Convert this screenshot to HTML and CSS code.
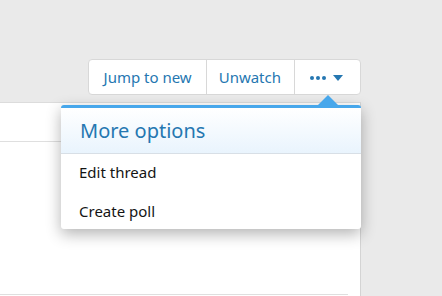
FILE: index.html
```html
<!DOCTYPE html>
<html lang="en">
<head>
  <meta charset="UTF-8">
  <title>Thread</title>
  <link rel="stylesheet" href="styles.css">
</head>
<body>
  <div class="topbar">
    <div class="button-group">
      <a class="group-btn jump" href="#">Jump to new</a>
      <a class="group-btn" href="#">Unwatch</a>
      <a class="group-btn more" href="#">
        <svg width="16" height="4" viewBox="0 0 16 4">
          <circle cx="2" cy="2" r="2" fill="#2577b1"/>
          <circle cx="8" cy="2" r="2" fill="#2577b1"/>
          <circle cx="14" cy="2" r="2" fill="#2577b1"/>
        </svg>
        <svg width="10" height="6" viewBox="0 0 10 6"><path d="M0 0 L10 0 L5 6 Z" fill="#2577b1"/></svg>
      </a>
    </div>
  </div>

  <div class="panel">
    <div class="panel-head"></div>
    <div class="panel-body">
      <div class="panel-line"></div>
    </div>
  </div>

  <div class="menu">
    <div class="menu-arrow"></div>
    <div class="menu-title">More options</div>
    <a class="menu-item" href="#">Edit thread</a>
    <a class="menu-item" href="#">Create poll</a>
  </div>
</body>
</html>
```

FILE: styles.css
```css
body {
  margin: 0;
  background: #eaeaea;
  font-family: 'Noto Sans', 'Open Sans', sans-serif;
  height: 296px;
  overflow: hidden;
}

a {
  text-decoration: none;
}

.topbar {
  height: 102px;
  box-sizing: border-box;
  padding: 59px 81px 0 0;
  display: flex;
  justify-content: flex-end;
  align-items: flex-start;
}

.button-group {
  display: flex;
  background: #fff;
  border: 1px solid #d8d8d8;
  border-radius: 4px;
  height: 34px;
}

.group-btn {
  display: flex;
  align-items: center;
  padding: 0 13px 0 12px;
  color: #2577b1;
  font-size: 15px;
  border-left: 1px solid #d8d8d8;
}

.group-btn:first-child {
  border-left: none;
}

.group-btn.jump {
  padding: 0 14px 0 15px;
}

.group-btn.more {
  gap: 7px;
  padding: 1px 17px 0 15px;
}

.panel {
  width: 360px;
  height: 194px;
  background: #fff;
  border-top: 1px solid #dcdcdc;
  border-right: 1px solid #d4d4d4;
}

.panel-head {
  height: 38px;
  border-bottom: 1px solid #dfdfdf;
}

.panel-body {
  padding: 152px 12px 0 0;
}

.panel-line {
  height: 1px;
  background: #dfdfdf;
}

.menu {
  position: absolute;
  left: 61px;
  top: 105px;
  width: 300px;
  background: #fff;
  border-top: 3px solid #47a7eb;
  border-radius: 3px;
  box-shadow: 0 5px 15px rgba(0, 0, 0, 0.3);
}

.menu-arrow {
  position: absolute;
  top: -13px;
  left: 257px;
  width: 0;
  height: 0;
  border-left: 10px solid transparent;
  border-right: 10px solid transparent;
  border-bottom: 10px solid #47a7eb;
}

.menu-title {
  height: 46px;
  box-sizing: border-box;
  padding: 9px 19px 0;
  font-size: 20px;
  color: #2577b1;
  background: linear-gradient(to bottom, #ffffff, #e9f4fd);
  border-bottom: 1px solid #d8dfe6;
}

.menu-item {
  display: block;
  padding: 8px 18px 11px;
  font-size: 15px;
  color: #141414;
  line-height: 20px;
}

.menu-item:last-child {
  padding-bottom: 8px;
}
```
